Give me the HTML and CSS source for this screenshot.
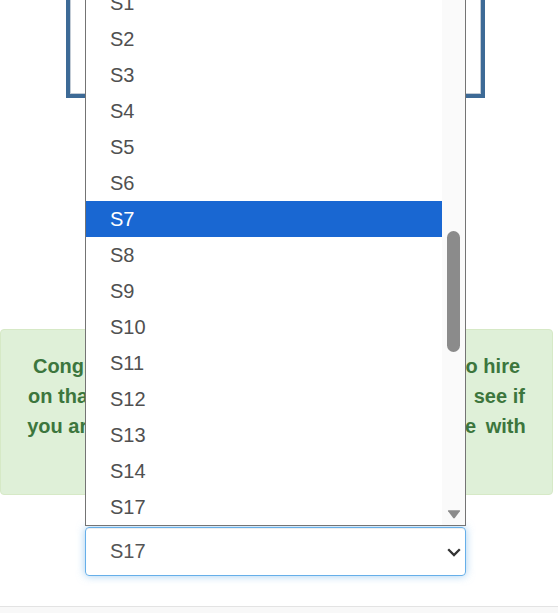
FILE: index.html
```
<!DOCTYPE html>
<html lang="en">
<head>
<meta charset="utf-8">
<title>Grade selection</title>
<link rel="stylesheet" href="styles.css">
</head>
<body>
<div class="page">
  <div class="frame"></div>
  <div class="alert">
    <p class="alert-text">Congratulations! You are now finally eligible to hire<br>on that position. Please check forms below to&nbsp; see if<br>you are invited to proceed further and continue&thinsp; with<br>the process.</p>
  </div>
  <div class="select">
    <span class="select-value">S17</span>
    <svg class="chevron" width="14" height="9" viewBox="0 0 14 9"><polyline points="1.2,1.2 7,7 12.8,1.2" fill="none" stroke="#333" stroke-width="2.3"/></svg>
  </div>
  <div class="footer"></div>

  <div class="popup">
    <ul class="options">
      <li class="option">S1</li>
      <li class="option">S2</li>
      <li class="option">S3</li>
      <li class="option">S4</li>
      <li class="option">S5</li>
      <li class="option">S6</li>
      <li class="option selected">S7</li>
      <li class="option">S8</li>
      <li class="option">S9</li>
      <li class="option">S10</li>
      <li class="option">S11</li>
      <li class="option">S12</li>
      <li class="option">S13</li>
      <li class="option">S14</li>
      <li class="option">S17</li>
    </ul>
    <div class="track">
      <div class="thumb"></div>
      <svg class="arrow-down" width="14" height="10" viewBox="0 0 14 10"><path d="M1.5 1.2 H12.5 Q13.6 1.2 12.9 2.2 L7.8 9 Q7 9.9 6.2 9 L1.1 2.2 Q0.4 1.2 1.5 1.2 Z" fill="#8b8b8b"/></svg>
    </div>
  </div>
</div>
</body>
</html>
```
FILE: styles.css
```
* { box-sizing: border-box; }
html, body { margin: 0; padding: 0; }
body {
  font-family: "Liberation Sans", Arial, sans-serif;
  background: #fff;
  width: 558px;
  height: 613px;
  overflow: hidden;
}
.page {
  position: relative;
  display: flex;
  flex-direction: column;
  height: 613px;
}
.frame {
  margin: -20px 0 0 66px;
  width: 419px;
  height: 118px;
  border: 4px solid #3d6a96;
  box-shadow: inset 0 0 0 1px #c3ccd6;
  background: #fff;
}
.alert {
  margin-top: 231px;
  width: 553px;
  height: 166px;
  padding: 21px 15px 23px;
  background: #dff0d8;
  border: 1px solid #d6e9c6;
  border-radius: 4px;
}
.alert-text {
  margin: 0;
  color: #3c763d;
  font-weight: bold;
  font-size: 20px;
  line-height: 30px;
  text-align: center;
  white-space: nowrap;
}
.select {
  margin: 32px 0 0 85px;
  width: 381px;
  height: 49px;
  border: 1px solid #66afe9;
  border-radius: 4px;
  box-shadow: inset 0 1px 1px rgba(0,0,0,.075), 0 0 8px rgba(102,175,233,.6);
  display: flex;
  align-items: center;
  justify-content: space-between;
  padding: 0 4px 0 24px;
  color: #555;
  font-size: 20px;
}
.chevron { margin-top: 1px; }
.footer {
  margin-top: 30px;
  flex: 1;
  border-top: 1px solid #e3e3e3;
  background: #f8f8f8;
}
.popup {
  position: absolute;
  left: 85px;
  top: -16px;
  width: 381px;
  height: 542px;
  border: 1px solid #747474;
  background: #fff;
  display: flex;
}
.options {
  list-style: none;
  margin: 0;
  padding: 0;
  width: 356px;
}
.option {
  height: 36px;
  line-height: 36px;
  padding-left: 24px;
  font-size: 20px;
  color: #505050;
}
.option.selected {
  background: #1967d2;
  color: #fff;
}
.track {
  flex: 1;
  background: #fafafa;
  display: flex;
  flex-direction: column;
  align-items: center;
}
.thumb {
  margin-top: 246px;
  width: 13px;
  height: 121px;
  border-radius: 7px;
  background: #8b8b8b;
}
.arrow-down {
  margin-top: auto;
  margin-bottom: 6px;
}
```
